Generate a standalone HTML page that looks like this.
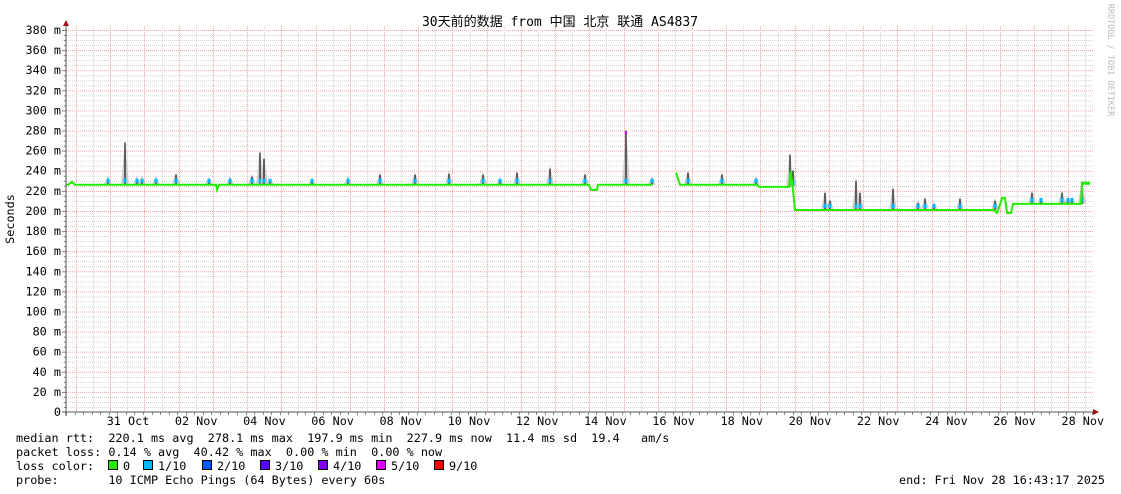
<!DOCTYPE html>
<html><head><meta charset="utf-8"><style>
html,body{margin:0;padding:0;background:#fff;}
body{width:1121px;height:494px;overflow:hidden;position:relative;}
svg{position:absolute;left:0;top:0;}
text{font-family:"DejaVu Sans Mono","Liberation Mono","Noto Sans CJK SC",monospace;font-size:11.8px;fill:#000;}
</style></head><body>
<svg id="g" width="1121" height="494" xmlns="http://www.w3.org/2000/svg">
<g id="grid"></g>
<g id="data"></g>
<line x1="66" y1="24" x2="66" y2="416" stroke="#555" stroke-width="1"/>
<polygon points="63,26 69,26 66,20" fill="#a01010"/>
<line x1="62" y1="412" x2="1096" y2="412" stroke="#555" stroke-width="1"/>
<polygon points="1093,409 1093,415 1099,412" fill="#a01010"/>
<text x="560" y="26" text-anchor="middle" style="font-family:'DejaVu Sans Mono','Noto Sans CJK SC',monospace;font-size:13px">30天前的数据 from 中国 北京 联通 AS4837</text>
<text transform="translate(14,219) rotate(-90)" text-anchor="middle">Seconds</text>
<text transform="translate(1108,60) rotate(90)" text-anchor="middle" style="fill:#bbb;font-size:8.5px">RRDTOOL / TOBI OETIKER</text>
<g id="ylab"></g>
<g id="xlab"></g>
<text x="16" y="442" xml:space="preserve">median rtt:  220.1 ms avg  278.1 ms max  197.9 ms min  227.9 ms now  11.4 ms sd  19.4   am/s</text>
<text x="16" y="456" xml:space="preserve">packet loss: 0.14 % avg  40.42 % max  0.00 % min  0.00 % now</text>
<text x="16" y="470" xml:space="preserve">loss color:</text>
<text x="16" y="484" xml:space="preserve">probe:       10 ICMP Echo Pings (64 Bytes) every 60s</text>
<text x="1105" y="484" text-anchor="end" xml:space="preserve">end: Fri Nov 28 16:43:17 2025</text>
<g id="legend"></g>
</svg>
<script>
var NS="http://www.w3.org/2000/svg";
function el(p,t,a,txt){var e=document.createElementNS(NS,t);for(var k in a)e.setAttribute(k,a[k]);if(txt!=null)e.textContent=txt;document.getElementById(p).appendChild(e);return e;}
function Y(ms){return 412-ms*382/380;}
for(var m=5;m<=380;m+=5){var y=Y(m);var maj=(m%20==0);
 el("grid","line",{x1:62,x2:1093,y1:y+0.5,y2:y+0.5,stroke:maj?"#f3a0a0":"#d6d6d6","stroke-dasharray":"1,1","stroke-width":1});
 el("grid","line",{x1:maj?62:64,x2:66,y1:y+0.5,y2:y+0.5,stroke:"#888"});}
for(var m=0;m<=380;m+=20){el("ylab","text",{x:61,y:Y(m)+4,"text-anchor":"end"},m==0?"0":m+" m");}
for(var i=0;i<31;i++){var x=76+34.22*i;if(x>1093)break;
 el("grid","line",{x1:Math.round(x)+0.5,x2:Math.round(x)+0.5,y1:26,y2:412,stroke:"#f3a0a0","stroke-dasharray":"1,1"});
 var x2=x+17.11; if(x2<1093) el("grid","line",{x1:Math.round(x2)+0.5,x2:Math.round(x2)+0.5,y1:26,y2:412,stroke:"#d4d4d4","stroke-dasharray":"1,1"});}
for(var i=0;i<=1000;i++){var x=66+8.55*i;if(x>1093)break;el("grid","line",{x1:Math.round(x)+0.5,x2:Math.round(x)+0.5,y1:412,y2:415,stroke:"#888"});}
var labs=["31 Oct","02 Nov","04 Nov","06 Nov","08 Nov","10 Nov","12 Nov","14 Nov","16 Nov","18 Nov","20 Nov","22 Nov","24 Nov","26 Nov","28 Nov"];
for(var i=0;i<labs.length;i++)el("xlab","text",{x:128+68.2*i,y:425,"text-anchor":"middle"},labs[i]);
var lg=[["#22ee00","0"],["#00b8ff","1/10"],["#0059ff","2/10"],["#5e00ff","3/10"],["#7e00ff","4/10"],["#dd00ff","5/10"],["#ff0000","9/10"]];
var lx=[109,144,203,261,319,377,435];
for(var i=0;i<lg.length;i++){el("legend","rect",{x:lx[i]-0.5,y:460.5,width:9,height:9,fill:lg[i][0],stroke:"#000"});el("legend","text",{x:lx[i]+14,y:470},lg[i][1]);}
var sp=[[108,232],[125,268],[137,232],[142,232],[156,232],[176,236],[209,231],[230,232],[252,234],[260,258],[264,252],[270,230],[312,230],[348,232],[380,236],[415,236],[449,237],[483,236],[500,231],[517,238],[550,242],[585,236],[626,280],[652,232],[688,238],[722,236],[756,232],[790,256],[793,240],[825,218],[830,210],[856,230],[860,218],[893,222],[918,208],[925,212],[934,206],[960,212],[995,210],[1032,218],[1041,210],[1062,218],[1068,212],[1072,210],[1082,228]];
var base=function(x){return x<795?(x>758?224:226):(x<1000?201:207);};
sp.forEach(function(s){var b=base(s[0]);
 el("data","polygon",{points:(s[0]-4)+","+Y(b)+" "+s[0]+","+Y(s[1]+3)+" "+(s[0]+4)+","+Y(b),fill:"#bbb",opacity:0.7});
 el("data","line",{x1:s[0],x2:s[0],y1:Y(b),y2:Y(s[1]),stroke:"#222","stroke-width":1.3});
 el("data","rect",{x:s[0]-1.5,y:Y(b)-6,width:3,height:4,fill:"#00b8ff"});});
el("data","rect",{x:625,y:Y(279),width:2,height:3,fill:"#dd00ff"});
var seg1=[[66,226],[68,226],[72,229],[75,226],[124,226],[125,226],[216,226],[217,221],[219,226],[589,226],[591,221],[597,221],[598,226],[652,226]];
var seg2=[[676,238],[680,226],[757,226],[759,224],[789,224],[791,240],[795,201],[994,201],[997,198],[1000,206],[1002,213],[1005,213],[1007,198],[1011,198],[1013,207],[1081,207],[1082,228],[1090,228]];
function pl(a){return a.map(function(p){return p[0]+","+Y(p[1]);}).join(" ");}
el("data","polyline",{points:pl(seg1),fill:"none",stroke:"#22ee00","stroke-width":2});
el("data","polyline",{points:pl(seg2),fill:"none",stroke:"#22ee00","stroke-width":2});
el("data","rect",{x:1082,y:Y(229),width:8,height:3,fill:"#22ee00"});
</script>
</body></html>
